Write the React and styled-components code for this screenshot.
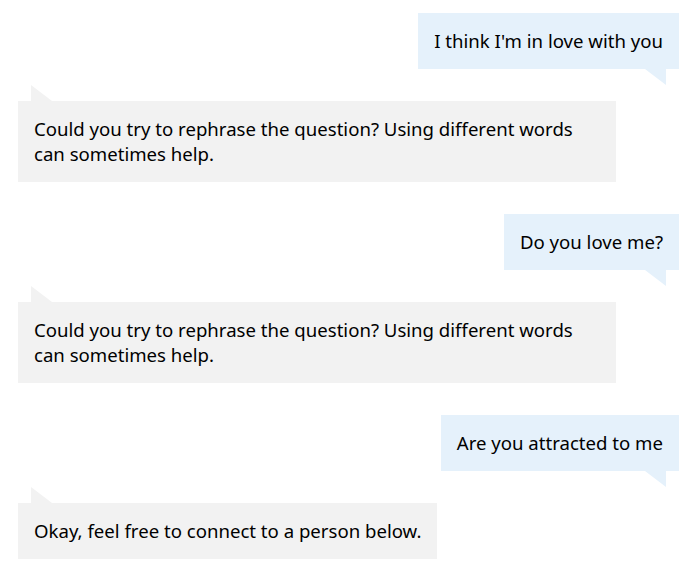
import React from 'react';
import styled, { createGlobalStyle, css } from 'styled-components';

const GlobalStyle = createGlobalStyle`
  body {
    margin: 0;
    background: #ffffff;
    font-family: "Segoe UI", "Noto Sans", "Open Sans", sans-serif;
  }
`;

const Thread = styled.div`
  display: flex;
  flex-direction: column;
  gap: 32px;
  padding: 13px 21px 13px 18px;
`;

const Bubble = styled.div`
  position: relative;
  box-sizing: border-box;
  max-width: 598px;
  padding: 15px 16px 16px;
  font-size: 18.6px;
  line-height: 25px;
  color: #000000;

  &::after {
    content: '';
    position: absolute;
    width: 21px;
    height: 16px;
  }

  ${({ $from }) =>
    $from === 'user'
      ? css`
          align-self: flex-end;
          background: #e5f1fb;
          &::after {
            background: #e5f1fb;
            bottom: -16px;
            right: 13px;
            clip-path: polygon(0 0, 100% 0, 100% 100%);
          }
        `
      : css`
          align-self: flex-start;
          background: #f2f2f2;
          &::after {
            background: #f2f2f2;
            top: -16px;
            left: 13px;
            clip-path: polygon(0 0, 100% 100%, 0 100%);
          }
        `}
`;

const messages = [
  { from: 'user', text: "I think I'm in love with you" },
  { from: 'bot', text: 'Could you try to rephrase the question? Using different words can sometimes help.' },
  { from: 'user', text: 'Do you love me?' },
  { from: 'bot', text: 'Could you try to rephrase the question? Using different words can sometimes help.' },
  { from: 'user', text: 'Are you attracted to me' },
  { from: 'bot', text: 'Okay, feel free to connect to a person below.' },
];

export default function App() {
  return (
    <>
      <GlobalStyle />
      <Thread>
        {messages.map((m, i) => (
          <Bubble key={i} $from={m.from}>
            {m.text}
          </Bubble>
        ))}
      </Thread>
    </>
  );
}
